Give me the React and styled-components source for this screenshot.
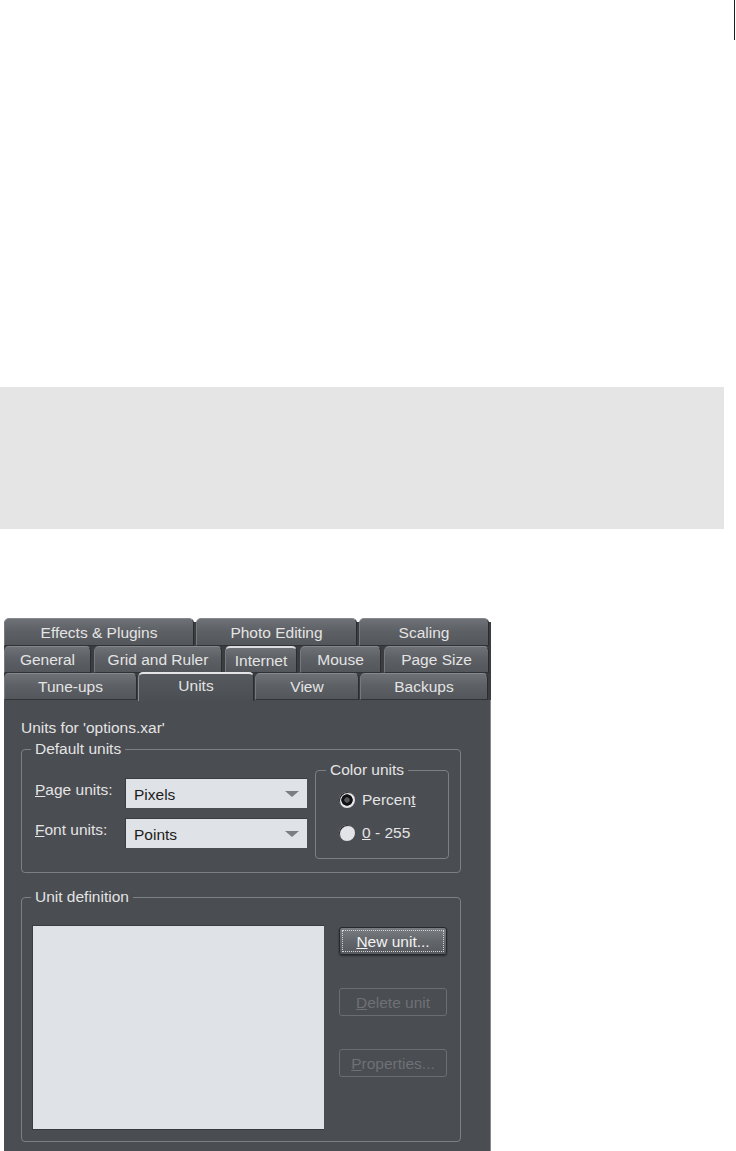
import React from 'react'
import styled, { createGlobalStyle, css } from 'styled-components'

const GlobalStyle = createGlobalStyle`
  html, body {
    margin: 0;
    padding: 0;
    background: #ffffff;
  }
  body {
    font-family: "Liberation Sans", Arial, sans-serif;
  }
`

const Page = styled.div`
  width: 736px;
  height: 1151px;
  overflow: hidden;
  background: #ffffff;
`

const TopBar = styled.div`
  display: flex;
  justify-content: flex-end;
  height: 40px;
  padding-right: 1px;
`

const Mark = styled.div`
  width: 1px;
  height: 40px;
  background: #1e1e1e;
`

const Note = styled.div`
  margin-top: 347px;
  width: 724px;
  height: 142px;
  background: #e5e5e5;
`

const Dialog = styled.div`
  margin-top: 89px;
  margin-left: 4px;
  width: 487px;
  font-family: "Liberation Sans", Arial, sans-serif;
  font-size: 15.5px;
  color: #e4e4e4;
`

const TabStrip = styled.div`
  display: flex;
  flex-direction: column;
`

const TabRow = styled.div`
  display: flex;
  gap: ${(p) => p.$gap}px;
  height: ${(p) => p.$h}px;
  background: ${(p) =>
    p.$first
      ? 'linear-gradient(to bottom, transparent 4px, #3b3d41 4px)'
      : '#3b3d41'};
`

const Tab = styled.div`
  box-sizing: border-box;
  width: ${(p) => p.$w}px;
  flex: none;
  display: flex;
  align-items: center;
  justify-content: center;
  border-radius: 5px 5px 0 0;
  border-top: 1px solid #85888d;
  border-left: 1px solid #76797e;
  border-right: 1px solid #2a2c2f;
  border-bottom: 1px solid #303236;
  background: linear-gradient(to bottom, #6e7176 0%, #5d6065 45%, #53565b 100%);
  white-space: nowrap;
  padding-top: 1px;

  ${(p) =>
    p.$hot &&
    css`
      border-top: 2px solid #dcdde0;
    `}

  ${(p) =>
    p.$active &&
    css`
      position: relative;
      z-index: 1;
      height: 29px;
      margin-top: -1px;
      border-top: 2px solid #e4e5e7;
      border-bottom: none;
      border-left: 1px solid #8a8d91;
      border-right: 1px solid #2a2c2f;
      background: linear-gradient(to bottom, #56595e 0%, #4b4e53 100%);
      align-items: flex-start;
      padding-top: 3px;
    `}
`

const Body = styled.div`
  background: #4a4d52;
  border-right: 1px solid #85888c;
  padding: 19px 25px 30px 17px;
  height: 500px;
`

const Caption = styled.div`
  line-height: 17px;
  white-space: nowrap;
`

const Group = styled.fieldset`
  margin: ${(p) => p.$mt || 0}px 0 0 0;
  padding: ${(p) => p.$pad};
  border: 1px solid #7c7f84;
  border-radius: 4px;
  min-width: 0;
  box-sizing: border-box;
  width: ${(p) => p.$w}px;
`

const Legend = styled.legend`
  padding: 0 4px;
  margin-left: ${(p) => p.$ml}px;
  line-height: 18px;
  white-space: nowrap;
`

const UnitsLayout = styled.div`
  display: flex;
  align-items: flex-start;
  gap: 8px;
`

const FieldColumn = styled.div`
  margin-top: 17px;
  display: flex;
  flex-direction: column;
  gap: 10px;
`

const FieldRow = styled.div`
  display: flex;
  align-items: center;
`

const FieldLabel = styled.label`
  width: 90px;
  white-space: nowrap;
  margin-top: -6px;
`

const Select = styled.div`
  position: relative;
  box-sizing: border-box;
  width: 182px;
  height: 30px;
  padding: 7px 0 0 8px;
  background: #dfe2e6;
  color: #1c1c1c;
  border-top: 1px solid #3a3c40;
  border-left: 1px solid #3a3c40;

  &::after {
    content: '';
    position: absolute;
    right: 8px;
    top: 12px;
    border-left: 7px solid transparent;
    border-right: 7px solid transparent;
    border-top: 6px solid #7b7e83;
  }
`

const RadioList = styled.div`
  display: flex;
  flex-direction: column;
  gap: 15px;
`

const RadioRow = styled.div`
  display: flex;
  align-items: center;
  gap: 7px;
  height: 18px;
  white-space: nowrap;
`

const RadioDot = styled.span`
  box-sizing: border-box;
  width: 16px;
  height: 16px;
  border-radius: 50%;
  background: #e2e4e7;
  box-shadow: inset 1px 1px 0 #2a2c2f;
  ${(p) =>
    p.$on &&
    css`
      background: radial-gradient(
        circle,
        #55575b 0 2.4px,
        #111213 3px 5.4px,
        #e2e4e7 6px
      );
    `}
`

const DefinitionLayout = styled.div`
  display: flex;
  align-items: flex-start;
  gap: 15px;
`

const ListBox = styled.div`
  box-sizing: border-box;
  width: 292px;
  height: 205px;
  background: #dfe2e6;
  border-top: 1px solid #3a3c40;
  border-left: 1px solid #3a3c40;
  border-bottom: 1px solid #36383c;
`

const ButtonColumn = styled.div`
  margin-top: 2px;
  display: flex;
  flex-direction: column;
  gap: 33px;
`

const Button = styled.div`
  box-sizing: border-box;
  width: 108px;
  height: 28px;
  display: flex;
  align-items: center;
  justify-content: center;
  border-radius: 3px;
  white-space: nowrap;
  padding-top: 1px;

  ${(p) =>
    p.$disabled
      ? css`
          border: 1px solid #6a6d72;
          color: #6e7176;
        `
      : css`
          border: 1px solid #26282b;
          color: #f2f2f2;
          background: linear-gradient(to bottom, #7a7d82 0%, #63666b 50%, #56595e 100%);
          box-shadow: 0 1px 2px rgba(0, 0, 0, 0.45);
          outline: 1px dotted #d6d6d6;
          outline-offset: -4px;
        `}
`

export default function App() {
  return (
    <>
      <GlobalStyle />
      <Page>
        <TopBar>
          <Mark />
        </TopBar>
        <Note />
        <Dialog>
          <TabStrip>
            <TabRow $first $gap={2} $h={28}>
              <Tab $w={190}>Effects &amp; Plugins</Tab>
              <Tab $w={161}>Photo Editing</Tab>
              <Tab $w={130}>Scaling</Tab>
            </TabRow>
            <TabRow $gap={3} $h={27}>
              <Tab $w={87}>General</Tab>
              <Tab $w={128}>Grid and Ruler</Tab>
              <Tab $w={72} $hot>
                Internet
              </Tab>
              <Tab $w={81}>Mouse</Tab>
              <Tab $w={105}>Page Size</Tab>
            </TabRow>
            <TabRow $gap={1} $h={27}>
              <Tab $w={133}>Tune-ups</Tab>
              <Tab $w={116} $active>
                Units
              </Tab>
              <Tab $w={104}>View</Tab>
              <Tab $w={128}>Backups</Tab>
            </TabRow>
          </TabStrip>

          <Body>
            <Caption>Units for 'options.xar'</Caption>

            <Group $mt={4} $w={440} $pad="3px 11px 13px 13px">
              <Legend $ml={-4}>Default units</Legend>
              <UnitsLayout>
                <FieldColumn>
                  <FieldRow>
                    <FieldLabel>
                      <u>P</u>age units:
                    </FieldLabel>
                    <Select>Pixels</Select>
                  </FieldRow>
                  <FieldRow>
                    <FieldLabel>
                      <u>F</u>ont units:
                    </FieldLabel>
                    <Select>Points</Select>
                  </FieldRow>
                </FieldColumn>

                <Group $w={134} $pad="12px 8px 16px 23px">
                  <Legend $ml={-13}>Color units</Legend>
                  <RadioList>
                    <RadioRow>
                      <RadioDot $on />
                      <span>
                        Percen<u>t</u>
                      </span>
                    </RadioRow>
                    <RadioRow>
                      <RadioDot />
                      <span>
                        <u>0</u> - 255
                      </span>
                    </RadioRow>
                  </RadioList>
                </Group>
              </UnitsLayout>
            </Group>

            <Group $mt={15} $w={440} $pad="19px 11px 11px 10px">
              <Legend $ml={-1}>Unit definition</Legend>
              <DefinitionLayout>
                <ListBox />
                <ButtonColumn>
                  <Button>
                    <span>
                      <u>N</u>ew unit...
                    </span>
                  </Button>
                  <Button $disabled>
                    <span>
                      <u>D</u>elete unit
                    </span>
                  </Button>
                  <Button $disabled>
                    <span>
                      <u>P</u>roperties...
                    </span>
                  </Button>
                </ButtonColumn>
              </DefinitionLayout>
            </Group>
          </Body>
        </Dialog>
      </Page>
    </>
  )
}
